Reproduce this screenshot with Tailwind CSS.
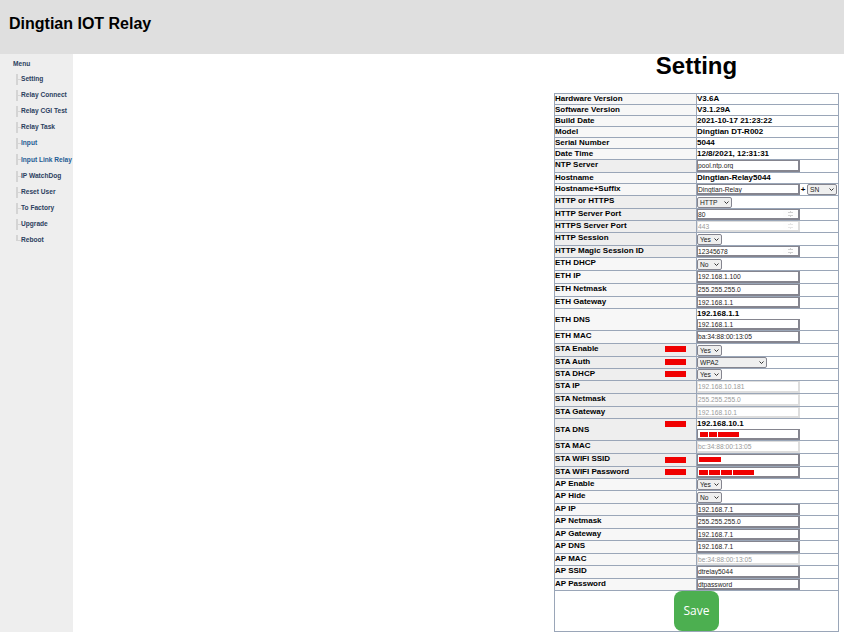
<!DOCTYPE html>
<html lang="en">
<head>
    <meta charset="UTF-8">
    <title>Dingtian IOT Relay</title>
    <script src="https://cdn.jsdelivr.net/npm/@tailwindcss/browser@4"></script>
</head>
<body class="h-[632px] w-[844px] overflow-hidden bg-white font-['Liberation_Sans',sans-serif]">
    <header class="h-[54px] bg-[#dfdfdf] pl-[9px] pt-[14px]">
        <h1 class="text-[16px] leading-[20px] font-bold text-black">Dingtian IOT Relay</h1>
    </header>
    <div class="flex h-[578px]">
        <nav class="w-[73px] shrink-0 bg-[#eeeeee] pl-[13px] pt-[5px] text-[6.6px] font-bold text-[#2c3e60]">
            <div class="h-[12px] leading-[9px]">Menu</div>
            <ul class="ml-[3px]">
                <li class="flex h-[16px] items-center whitespace-nowrap"><span class="flex h-[11px] w-[5px] items-center border-l-2 border-[#d4d4d4]"><span class="h-px w-full bg-[#d4d4d4]"></span></span>Setting</li>
                <li class="flex h-[16px] items-center whitespace-nowrap"><span class="flex h-[11px] w-[5px] items-center border-l-2 border-[#d4d4d4]"><span class="h-px w-full bg-[#d4d4d4]"></span></span>Relay Connect</li>
                <li class="flex h-[16px] items-center whitespace-nowrap"><span class="flex h-[11px] w-[5px] items-center border-l-2 border-[#d4d4d4]"><span class="h-px w-full bg-[#d4d4d4]"></span></span>Relay CGI Test</li>
                <li class="flex h-[16px] items-center whitespace-nowrap"><span class="flex h-[11px] w-[5px] items-center border-l-2 border-[#d4d4d4]"><span class="h-px w-full bg-[#d4d4d4]"></span></span>Relay Task</li>
                <li class="flex h-[16px] items-center whitespace-nowrap text-[#1f5c94]"><span class="flex h-[11px] w-[5px] items-center border-l-2 border-[#d4d4d4]"><span class="h-px w-full bg-[#d4d4d4]"></span></span>Input</li>
                <li class="flex h-[17px] items-center whitespace-nowrap text-[#1f5c94]"><span class="flex h-[11px] w-[5px] items-center border-l-2 border-[#d4d4d4]"><span class="h-px w-full bg-[#d4d4d4]"></span></span>Input Link Relay</li>
                <li class="flex h-[16px] items-center whitespace-nowrap"><span class="flex h-[11px] w-[5px] items-center border-l-2 border-[#d4d4d4]"><span class="h-px w-full bg-[#d4d4d4]"></span></span>IP WatchDog</li>
                <li class="flex h-[16px] items-center whitespace-nowrap"><span class="flex h-[11px] w-[5px] items-center border-l-2 border-[#d4d4d4]"><span class="h-px w-full bg-[#d4d4d4]"></span></span>Reset User</li>
                <li class="flex h-[16px] items-center whitespace-nowrap"><span class="flex h-[11px] w-[5px] items-center border-l-2 border-[#d4d4d4]"><span class="h-px w-full bg-[#d4d4d4]"></span></span>To Factory</li>
                <li class="flex h-[16px] items-center whitespace-nowrap"><span class="flex h-[11px] w-[5px] items-center border-l-2 border-[#d4d4d4]"><span class="h-px w-full bg-[#d4d4d4]"></span></span>Upgrade</li>
                <li class="flex h-[16px] items-center whitespace-nowrap"><span class="mb-[5px] h-[6px] w-[5px] border-b border-l-2 border-[#d4d4d4]"></span>Reboot</li>
            </ul>
        </nav>
        <main class="w-[771px]">
            <h2 class="ml-[481px] w-[285px] text-center text-[24px] leading-[24px] font-bold text-black">Setting</h2>
            <table class="mt-[15px] ml-[481px] w-[285px] table-fixed border-collapse text-[8px] leading-[10px] font-bold text-black [&_td]:border [&_td]:border-[#9aa6b8] [&_td]:p-0 [&_td:first-child]:relative">
                <colgroup><col class="w-[142px]"><col></colgroup>
                <tbody>
                    <tr class="h-[11px]"><td class="bg-[#f7f7f7]">Hardware Version</td><td>V3.6A</td></tr>
                    <tr class="h-[11px]"><td class="bg-[#f7f7f7]">Software Version</td><td>V3.1.29A</td></tr>
                    <tr class="h-[11px]"><td class="bg-[#f7f7f7]">Build Date</td><td>2021-10-17 21:23:22</td></tr>
                    <tr class="h-[11px]"><td class="bg-[#f7f7f7]">Model</td><td>Dingtian DT-R002</td></tr>
                    <tr class="h-[11px]"><td class="bg-[#f7f7f7]">Serial Number</td><td>5044</td></tr>
                    <tr class="h-[11px]"><td class="bg-[#f7f7f7]">Date Time</td><td>12/8/2021, 12:31:31</td></tr>
                    <tr class="h-[13px]"><td class="bg-[#eeeeee] align-top">NTP Server</td><td><input value="pool.ntp.org" class="block h-[12px] w-[103px] border border-r-2 border-b-2 border-[#85858f] text-[6.7px] font-normal text-[#262222]"></td></tr>
                    <tr class="h-[11px]"><td class="bg-[#f7f7f7]">Hostname</td><td>Dingtian-Relay5044</td></tr>
                    <tr class="h-[12px]"><td class="bg-[#f7f7f7] align-top">Hostname+Suffix</td><td><div class="flex items-center"><input value="Dingtian-Relay" class="block h-[11px] w-[103px] border border-r-2 border-b-2 border-[#85858f] text-[6.7px] font-normal text-[#262222]"><span class="w-[6px] text-center">+</span><div class="relative ml-px w-[30px]"><select class="block h-[11px] w-full appearance-none rounded-[2px] border border-[#85858f] bg-[#efefef] pl-[2px] text-[6.7px] font-normal text-[#222]"><option>SN</option></select><svg class="pointer-events-none absolute top-[4px] right-[3px] h-[3px] w-[5px]" viewBox="0 0 5 3" fill="none" stroke="#333" stroke-width="1"><path d="M0.5 0.5 2.5 2.5 4.5 0.5"/></svg></div></div></td></tr>
                    <tr class="h-[13px]"><td class="bg-[#eeeeee] align-top">HTTP or HTTPS</td><td><div class="relative w-[35px]"><select class="block h-[11px] w-full appearance-none rounded-[2px] border border-[#85858f] bg-[#efefef] pl-[2px] text-[6.7px] font-normal text-[#222]"><option>HTTP</option></select><svg class="pointer-events-none absolute top-[4px] right-[3px] h-[3px] w-[5px]" viewBox="0 0 5 3" fill="none" stroke="#333" stroke-width="1"><path d="M0.5 0.5 2.5 2.5 4.5 0.5"/></svg></div></td></tr>
                    <tr class="h-[12px]"><td class="bg-[#eeeeee] align-top">HTTP Server Port</td><td><input type="number" value="80" class="block h-[11px] w-[103px] border border-r-2 border-b-2 border-[#85858f] text-[6.7px] font-normal text-[#262222] [&::-webkit-inner-spin-button]:opacity-40"></td></tr>
                    <tr class="h-[12px]"><td class="bg-[#eeeeee] align-top">HTTPS Server Port</td><td><input type="number" disabled value="443" class="block h-[11px] w-[103px] border border-r-2 border-b-2 border-[#dddddd] text-[6.7px] font-normal text-[#999999] [&::-webkit-inner-spin-button]:opacity-20"></td></tr>
                    <tr class="h-[13px]"><td class="bg-[#eeeeee] align-top">HTTP Session</td><td><div class="relative w-[25px]"><select class="block h-[11px] w-full appearance-none rounded-[2px] border border-[#85858f] bg-[#efefef] pl-[2px] text-[6.7px] font-normal text-[#222]"><option>Yes</option></select><svg class="pointer-events-none absolute top-[4px] right-[3px] h-[3px] w-[5px]" viewBox="0 0 5 3" fill="none" stroke="#333" stroke-width="1"><path d="M0.5 0.5 2.5 2.5 4.5 0.5"/></svg></div></td></tr>
                    <tr class="h-[12px]"><td class="bg-[#eeeeee] align-top">HTTP Magic Session ID</td><td><input type="number" value="12345678" class="block h-[11px] w-[103px] border border-r-2 border-b-2 border-[#85858f] text-[6.7px] font-normal text-[#262222] [&::-webkit-inner-spin-button]:opacity-40"></td></tr>
                    <tr class="h-[13px]"><td class="bg-[#f7f7f7] align-top">ETH DHCP</td><td><div class="relative w-[25px]"><select class="block h-[11px] w-full appearance-none rounded-[2px] border border-[#85858f] bg-[#efefef] pl-[2px] text-[6.7px] font-normal text-[#222]"><option>No</option></select><svg class="pointer-events-none absolute top-[4px] right-[3px] h-[3px] w-[5px]" viewBox="0 0 5 3" fill="none" stroke="#333" stroke-width="1"><path d="M0.5 0.5 2.5 2.5 4.5 0.5"/></svg></div></td></tr>
                    <tr class="h-[13px]"><td class="bg-[#f7f7f7] align-top">ETH IP</td><td><input value="192.168.1.100" class="block h-[12px] w-[103px] border border-r-2 border-b-2 border-[#85858f] text-[6.7px] font-normal text-[#262222]"></td></tr>
                    <tr class="h-[13px]"><td class="bg-[#f7f7f7] align-top">ETH Netmask</td><td><input value="255.255.255.0" class="block h-[12px] w-[103px] border border-r-2 border-b-2 border-[#85858f] text-[6.7px] font-normal text-[#262222]"></td></tr>
                    <tr class="h-[12px]"><td class="bg-[#f7f7f7] align-top">ETH Gateway</td><td><input value="192.168.1.1" class="block h-[11px] w-[103px] border border-r-2 border-b-2 border-[#85858f] text-[6.7px] font-normal text-[#262222]"></td></tr>
                    <tr class="h-[22px]"><td class="bg-[#f7f7f7]">ETH DNS</td><td>192.168.1.1<input value="192.168.1.1" class="block h-[11px] w-[103px] border border-r-2 border-b-2 border-[#85858f] text-[6.7px] font-normal text-[#262222]"></td></tr>
                    <tr class="h-[13px]"><td class="bg-[#f7f7f7] align-top">ETH MAC</td><td><input value="ba:34:88:00:13:05" class="block h-[12px] w-[103px] border border-r-2 border-b-2 border-[#85858f] text-[6.7px] font-normal text-[#262222]"></td></tr>
                    <tr class="h-[13px]"><td class="bg-[#eeeeee] align-top">STA Enable<span class="absolute top-[2px] right-[10px] h-[6px] w-[21px] bg-[#f00000]"></span></td><td><div class="relative w-[25px]"><select class="block h-[11px] w-full appearance-none rounded-[2px] border border-[#85858f] bg-[#efefef] pl-[2px] text-[6.7px] font-normal text-[#222]"><option>Yes</option></select><svg class="pointer-events-none absolute top-[4px] right-[3px] h-[3px] w-[5px]" viewBox="0 0 5 3" fill="none" stroke="#333" stroke-width="1"><path d="M0.5 0.5 2.5 2.5 4.5 0.5"/></svg></div></td></tr>
                    <tr class="h-[12px]"><td class="bg-[#eeeeee] align-top">STA Auth<span class="absolute top-[2px] right-[10px] h-[6px] w-[21px] bg-[#f00000]"></span></td><td><div class="relative w-[70px]"><select class="block h-[11px] w-full appearance-none rounded-[2px] border border-[#85858f] bg-[#efefef] pl-[2px] text-[6.7px] font-normal text-[#222]"><option>WPA2</option></select><svg class="pointer-events-none absolute top-[4px] right-[3px] h-[3px] w-[5px]" viewBox="0 0 5 3" fill="none" stroke="#333" stroke-width="1"><path d="M0.5 0.5 2.5 2.5 4.5 0.5"/></svg></div></td></tr>
                    <tr class="h-[12px]"><td class="bg-[#eeeeee] align-top">STA DHCP<span class="absolute top-[2px] right-[10px] h-[6px] w-[21px] bg-[#f00000]"></span></td><td><div class="relative w-[25px]"><select class="block h-[11px] w-full appearance-none rounded-[2px] border border-[#85858f] bg-[#efefef] pl-[2px] text-[6.7px] font-normal text-[#222]"><option>Yes</option></select><svg class="pointer-events-none absolute top-[4px] right-[3px] h-[3px] w-[5px]" viewBox="0 0 5 3" fill="none" stroke="#333" stroke-width="1"><path d="M0.5 0.5 2.5 2.5 4.5 0.5"/></svg></div></td></tr>
                    <tr class="h-[13px]"><td class="bg-[#eeeeee] align-top">STA IP</td><td><input disabled value="192.168.10.181" class="block h-[12px] w-[103px] border border-r-2 border-b-2 border-[#dddddd] text-[6.7px] font-normal text-[#999999]"></td></tr>
                    <tr class="h-[13px]"><td class="bg-[#eeeeee] align-top">STA Netmask</td><td><input disabled value="255.255.255.0" class="block h-[12px] w-[103px] border border-r-2 border-b-2 border-[#dddddd] text-[6.7px] font-normal text-[#999999]"></td></tr>
                    <tr class="h-[12px]"><td class="bg-[#eeeeee] align-top">STA Gateway</td><td><input disabled value="192.168.10.1" class="block h-[11px] w-[103px] border border-r-2 border-b-2 border-[#dddddd] text-[6.7px] font-normal text-[#999999]"></td></tr>
                    <tr class="h-[22px]"><td class="bg-[#eeeeee]">STA DNS<span class="absolute top-[2px] right-[10px] h-[6px] w-[21px] bg-[#f00000]"></span></td><td><div class="relative">192.168.10.1<input class="block h-[11px] w-[103px] border border-r-2 border-b-2 border-[#85858f]"><div class="absolute top-[13px] left-[3px] flex gap-px"><span class="h-[5px] w-[8px] bg-[#f00000]"></span><span class="h-[5px] w-[8px] bg-[#f00000]"></span><span class="h-[5px] w-[21px] bg-[#f00000]"></span></div></div></td></tr>
                    <tr class="h-[13px]"><td class="bg-[#eeeeee] align-top">STA MAC</td><td><input disabled value="bc:34:88:00:13:05" class="block h-[12px] w-[103px] border border-r-2 border-b-2 border-[#dddddd] text-[6.7px] font-normal text-[#999999]"></td></tr>
                    <tr class="h-[13px]"><td class="bg-[#eeeeee] align-top">STA WIFI SSID<span class="absolute top-[3px] right-[10px] h-[6px] w-[21px] bg-[#f00000]"></span></td><td><div class="relative"><input class="block h-[12px] w-[103px] border border-r-2 border-b-2 border-[#85858f]"><span class="absolute top-[3px] left-[2px] h-[5px] w-[22px] bg-[#f00000]"></span></div></td></tr>
                    <tr class="h-[12px]"><td class="bg-[#eeeeee] align-top">STA WIFI Password<span class="absolute top-[2px] right-[10px] h-[6px] w-[21px] bg-[#f00000]"></span></td><td><div class="relative"><input class="block h-[11px] w-[103px] border border-r-2 border-b-2 border-[#85858f]"><div class="absolute top-[3px] left-[2px] flex gap-px"><span class="h-[5px] w-[9px] bg-[#f00000]"></span><span class="h-[5px] w-[11px] bg-[#f00000]"></span><span class="h-[5px] w-[11px] bg-[#f00000]"></span><span class="h-[5px] w-[21px] bg-[#f00000]"></span></div></div></td></tr>
                    <tr class="h-[12px]"><td class="bg-[#f7f7f7] align-top">AP Enable</td><td><div class="relative w-[25px]"><select class="block h-[11px] w-full appearance-none rounded-[2px] border border-[#85858f] bg-[#efefef] pl-[2px] text-[6.7px] font-normal text-[#222]"><option>Yes</option></select><svg class="pointer-events-none absolute top-[4px] right-[3px] h-[3px] w-[5px]" viewBox="0 0 5 3" fill="none" stroke="#333" stroke-width="1"><path d="M0.5 0.5 2.5 2.5 4.5 0.5"/></svg></div></td></tr>
                    <tr class="h-[13px]"><td class="bg-[#f7f7f7] align-top">AP Hide</td><td><div class="relative w-[25px]"><select class="block h-[11px] w-full appearance-none rounded-[2px] border border-[#85858f] bg-[#efefef] pl-[2px] text-[6.7px] font-normal text-[#222]"><option>No</option></select><svg class="pointer-events-none absolute top-[4px] right-[3px] h-[3px] w-[5px]" viewBox="0 0 5 3" fill="none" stroke="#333" stroke-width="1"><path d="M0.5 0.5 2.5 2.5 4.5 0.5"/></svg></div></td></tr>
                    <tr class="h-[12px]"><td class="bg-[#f7f7f7] align-top">AP IP</td><td><input value="192.168.7.1" class="block h-[11px] w-[103px] border border-r-2 border-b-2 border-[#85858f] text-[6.7px] font-normal text-[#262222]"></td></tr>
                    <tr class="h-[13px]"><td class="bg-[#f7f7f7] align-top">AP Netmask</td><td><input value="255.255.255.0" class="block h-[12px] w-[103px] border border-r-2 border-b-2 border-[#85858f] text-[6.7px] font-normal text-[#262222]"></td></tr>
                    <tr class="h-[12px]"><td class="bg-[#f7f7f7] align-top">AP Gateway</td><td><input value="192.168.7.1" class="block h-[11px] w-[103px] border border-r-2 border-b-2 border-[#85858f] text-[6.7px] font-normal text-[#262222]"></td></tr>
                    <tr class="h-[13px]"><td class="bg-[#f7f7f7] align-top">AP DNS</td><td><input value="192.168.7.1" class="block h-[12px] w-[103px] border border-r-2 border-b-2 border-[#85858f] text-[6.7px] font-normal text-[#262222]"></td></tr>
                    <tr class="h-[12px]"><td class="bg-[#f7f7f7] align-top">AP MAC</td><td><input disabled value="be:34:88:00:13:05" class="block h-[11px] w-[103px] border border-r-2 border-b-2 border-[#dddddd] text-[6.7px] font-normal text-[#999999]"></td></tr>
                    <tr class="h-[13px]"><td class="bg-[#f7f7f7] align-top">AP SSID</td><td><input value="dtrelay5044" class="block h-[12px] w-[103px] border border-r-2 border-b-2 border-[#85858f] text-[6.7px] font-normal text-[#262222]"></td></tr>
                    <tr class="h-[12px]"><td class="bg-[#f7f7f7] align-top">AP Password</td><td><input value="dtpassword" class="block h-[11px] w-[103px] border border-r-2 border-b-2 border-[#85858f] text-[6.7px] font-normal text-[#262222]"></td></tr>
                    <tr class="h-[41px]"><td colspan="2" class="text-center"><button class="mx-auto block h-[40px] w-[45px] rounded-[8px] bg-[#4caf50] font-['Open_Sans',sans-serif] text-[12px] font-normal text-white">Save</button></td></tr>
                </tbody>
            </table>
        </main>
    </div>
</body>
</html>
